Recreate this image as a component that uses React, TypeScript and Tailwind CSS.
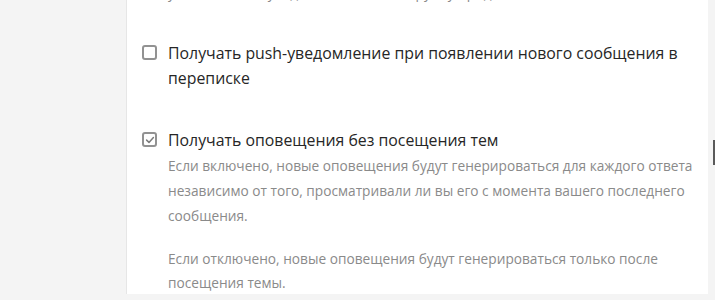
import React from 'react';

const font = { fontFamily: '"Open Sans", "Noto Sans", sans-serif' };

function Checkbox({ checked }: { checked: boolean }) {
    return (
        <div className="w-[15px] h-[15px] mt-[4px] shrink-0 rounded-[3px] border-2 border-[#929292] bg-white flex items-center justify-center">
            {checked && (
                <svg width="10" height="10" viewBox="0 0 10 10" fill="none">
                    <path d="M1.6 5.1 L4 7.4 L8.4 2.5" stroke="#7c7c7c" strokeWidth="1.5" strokeLinecap="round" strokeLinejoin="round" />
                </svg>
            )}
        </div>
    );
}

export default function App() {
    return (
        <div className="w-[715px] h-[300px] overflow-hidden bg-[#f4f4f4] flex flex-col" style={font}>
            <div className="flex flex-1 min-h-0">
                <div className="w-[126px] shrink-0 bg-[#f4f4f4]" />
                <div className="flex-1 bg-white border-l border-[#e6e6e6] pl-[15px] pr-[6px] overflow-hidden">
                    <p className="-mt-[20px] text-[13.7px] leading-[25px] text-[#8a8a8a] pl-[26px] whitespace-nowrap">
                        у вас появятся уведомления, если в группу придёт новый ответ
                    </p>

                    <div className="mt-[36px] flex gap-[11px]">
                        <Checkbox checked={false} />
                        <div className="text-[15.85px] leading-[25px] text-[#262626] pr-[8px]">
                            Получать push-уведомление при появлении нового сообщения в переписке
                        </div>
                    </div>

                    <div className="mt-[37px] flex gap-[11px]">
                        <Checkbox checked={true} />
                        <div>
                            <div className="text-[15.85px] leading-[25px] text-[#262626]">
                                Получать оповещения без посещения тем
                            </div>
                            <p className="text-[13.7px] leading-[25px] text-[#8a8a8a]">
                                Если включено, новые оповещения будут генерироваться для каждого ответа независимо от того, просматривали ли вы его с момента вашего последнего сообщения.
                            </p>
                            <p className="mt-[19px] text-[13.7px] leading-[24px] text-[#8a8a8a]">
                                Если отключено, новые оповещения будут генерироваться только после посещения темы.
                            </p>
                        </div>
                    </div>
                </div>
                <div className="w-[7px] shrink-0 bg-[#f4f4f4] flex justify-end pt-[140px]">
                    <div className="w-[2px] h-[25px] bg-[#5a5a5a]" />
                </div>
            </div>
            <div className="h-[6px] shrink-0 bg-[#f4f4f4]" />
        </div>
    );
}
